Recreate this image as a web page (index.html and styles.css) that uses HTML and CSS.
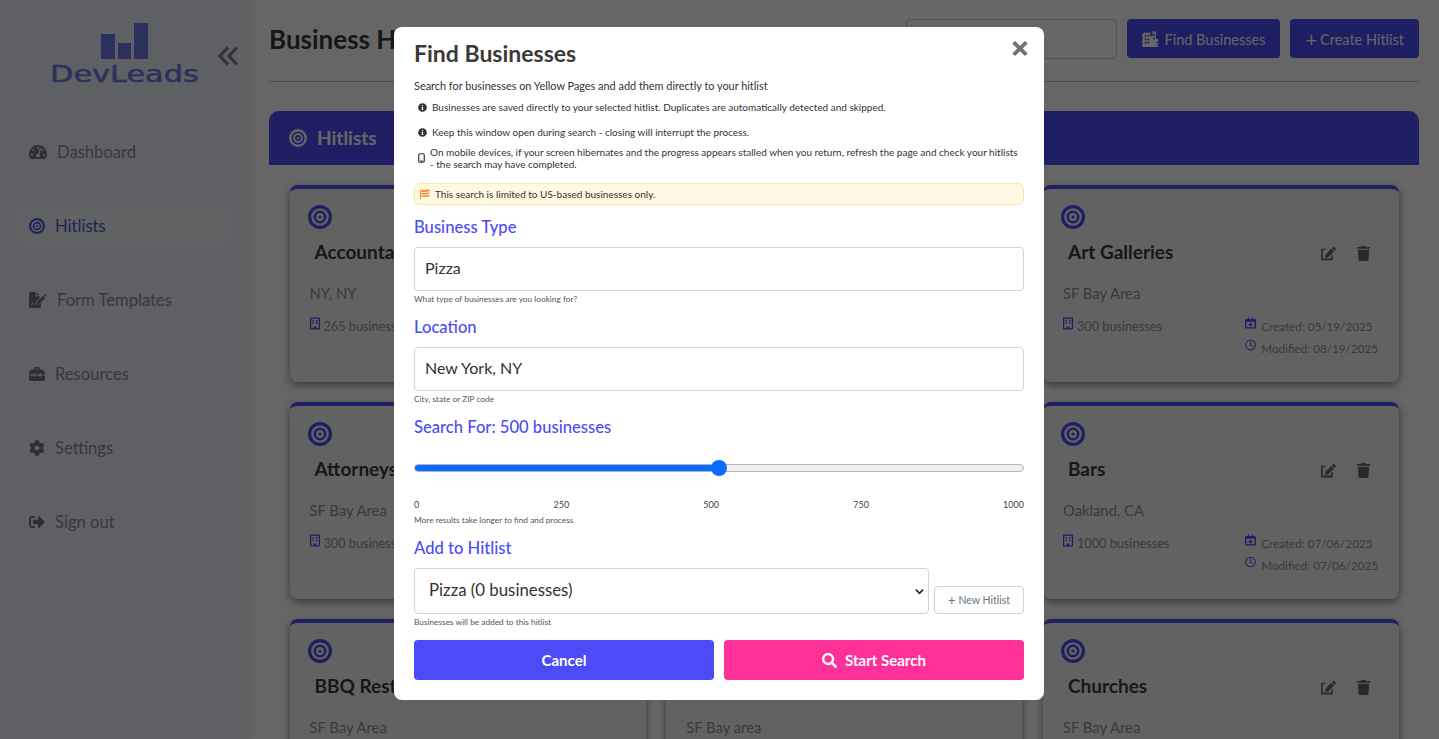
FILE: index.html
```html
<!DOCTYPE html>
<html lang="en">
<head>
    <meta charset="UTF-8">
    <title>DevLeads - Business Hitlists</title>
    <link rel="stylesheet" href="styles.css">
</head>
<body>
    <svg class="sprites" xmlns="http://www.w3.org/2000/svg">
        <symbol id="i-target" viewBox="0 0 24 24"><circle cx="12" cy="12" r="10.4" fill="none" stroke="currentColor" stroke-width="3.2"/><circle cx="12" cy="12" r="5.2" fill="none" stroke="currentColor" stroke-width="2.6"/><circle cx="12" cy="12" r="1.6" fill="currentColor"/></symbol>
        <symbol id="i-dash" viewBox="0 0 576 512"><path fill="currentColor" d="M288 32C128.94 32 0 160.94 0 320c0 52.8 14.25 102.26 39.06 144.8 5.61 9.62 16.3 15.2 27.44 15.2h443c11.14 0 21.83-5.58 27.44-15.2C561.75 422.26 576 372.8 576 320c0-159.06-128.94-288-288-288zm0 64c14.71 0 26.58 10.13 30.32 23.65-1.11 2.26-2.64 4.23-3.45 6.67l-9.22 27.67c-5.13 3.49-10.97 6.01-17.64 6.01-17.67 0-32-14.33-32-32S270.33 96 288 96zM96 384c-17.67 0-32-14.33-32-32s14.33-32 32-32 32 14.33 32 32-14.33 32-32 32zm48-160c-17.67 0-32-14.33-32-32s14.33-32 32-32 32 14.33 32 32-14.33 32-32 32zm246.77-72.41l-61.33 184C343.13 347.33 352 364.54 352 384c0 11.72-3.38 22.55-8.88 32H232.88c-5.5-9.45-8.88-20.28-8.88-32 0-33.94 26.5-61.43 59.9-63.59l61.34-184.01c4.17-12.56 17.73-19.45 30.36-15.17 12.57 4.19 19.35 17.79 15.17 30.36zm14.66 57.2l15.52-46.55c3.47-1.29 7.13-2.23 11.05-2.23 17.67 0 32 14.33 32 32s-14.33 32-32 32c-11.38-.01-20.89-6.28-26.57-15.22zM480 384c-17.67 0-32-14.33-32-32s14.33-32 32-32 32 14.33 32 32-14.33 32-32 32z"/></symbol>
        <symbol id="i-form" viewBox="0 0 36 32"><path fill="currentColor" d="M0 2.5A2.5 2.5 0 0 1 2.5 0H13v8.5h8.500V12L14 19.500 13 25h7l4-3.500V29.500A2.500 2.500 0 0 1 21.500 32h-19A2.500 2.500 0 0 1 0 29.500z"/><path fill="currentColor" d="M15 0.300 21.300 6.600H15zM16 19.500 28.500 7l4.500 4.500L20.500 24l-5.500 1zM30 5.500l2-2 4 4-2 2z"/><path fill="none" stroke="#edf0f7" stroke-width="1.400" d="M4 26l3-4 2 3 2-2"/></symbol>
        <symbol id="i-toolbox" viewBox="0 0 32 28"><path fill="currentColor" d="M10 5V3a3 3 0 0 1 3-3h6a3 3 0 0 1 3 3v2h3.500c1 0 1.800.4 2.500 1l3 3c.6.6 1 1.500 1 2.300V15h-8v-2h-4v2h-8v-2H8v2H0v-3.700c0-.8.300-1.700 1-2.300l3-3c.7-.6 1.500-1 2.500-1zm3-2v2h6V3zM0 17h8v2h4v-2h8v2h4v-2h8v8a3 3 0 0 1-3 3H3a3 3 0 0 1-3-3z"/></symbol>
        <symbol id="i-cog" viewBox="0 0 512 512"><path fill="currentColor" d="M487.4 315.7l-42.6-24.6c4.3-23.2 4.3-47 0-70.2l42.6-24.6c4.9-2.8 7.1-8.6 5.5-14-11.1-35.6-30-67.8-54.7-94.6-3.8-4.1-10-5.1-14.8-2.3L380.8 110c-17.9-15.4-38.5-27.3-60.8-35.1V25.8c0-5.6-3.9-10.5-9.4-11.7-36.7-8.2-74.3-7.8-109.2 0-5.5 1.2-9.4 6.1-9.4 11.7V75c-22.2 7.9-42.8 19.8-60.8 35.1L88.7 85.5c-4.9-2.8-11-1.9-14.8 2.3-24.7 26.7-43.6 58.9-54.7 94.6-1.7 5.4.6 11.2 5.5 14L67.3 221c-4.3 23.2-4.3 47 0 70.2l-42.6 24.6c-4.9 2.8-7.1 8.6-5.5 14 11.1 35.6 30 67.8 54.7 94.6 3.8 4.1 10 5.1 14.8 2.3l42.6-24.6c17.9 15.4 38.5 27.3 60.8 35.1v49.2c0 5.6 3.9 10.5 9.4 11.7 36.7 8.2 74.3 7.8 109.2 0 5.5-1.2 9.4-6.1 9.4-11.7v-49.2c22.2-7.9 42.8-19.8 60.8-35.1l42.6 24.6c4.9 2.8 11 1.9 14.8-2.3 24.7-26.7 43.6-58.9 54.7-94.6 1.5-5.5-.7-11.3-5.6-14.1zM256 336c-44.1 0-80-35.9-80-80s35.9-80 80-80 80 35.9 80 80-35.9 80-80 80z"/></symbol>
        <symbol id="i-signout" viewBox="0 0 512 512"><path fill="currentColor" d="M497 273L329 441c-15 15-41 4.500-41-17v-96H152c-13.300 0-24-10.700-24-24v-96c0-13.300 10.700-24 24-24h136V88c0-21.400 25.900-32 41-17l168 168c9.300 9.400 9.300 24.600 0 34zM192 436v-40c0-6.600-5.400-12-12-12H96c-17.700 0-32-14.300-32-32V160c0-17.700 14.300-32 32-32h84c6.600 0 12-5.400 12-12V76c0-6.600-5.400-12-12-12H96c-53 0-96 43-96 96v192c0 53 43 96 96 96h84c6.600 0 12-5.400 12-12z"/></symbol>
        <symbol id="i-city" viewBox="0 0 32 28"><path fill="currentColor" d="M3 2h2v2h2V2h2v2h2V2h2v2h1v5h4V0h2v2h2V0h2v2h0v12h2a2 2 0 0 1 2 2v12H0V4h3zM4 7v3h3V7zm5 0v3h3V7zM4 13v3h3v-3zm5 0v3h3v-3zM4 19v3h3v-3zm5 0v3h3v-3zm10-13v3h3V6zm0 6v3h3v-3zm6 6v3h3v-3zm0 5v2h3v-2z" fill-rule="evenodd"/></symbol>
        <symbol id="i-building" viewBox="0 0 20 24"><path fill="currentColor" fill-rule="evenodd" d="M2 0h16a2 2 0 0 1 2 2v20a2 2 0 0 1-2 2H2a2 2 0 0 1-2-2V2a2 2 0 0 1 2-2zm.500 2.500v19h5V18h5v3.500h5v-19zM5 5h3v3H5zm7 0h3v3h-3zM5 10h3v3H5zm7 0h3v3h-3z"/></symbol>
        <symbol id="i-cal" viewBox="0 0 24 24"><path fill="currentColor" fill-rule="evenodd" d="M6 0h3v3h6V0h3v3h3a3 3 0 0 1 3 3v15a3 3 0 0 1-3 3H3a3 3 0 0 1-3-3V6a3 3 0 0 1 3-3h3zM3 9v12h18V9zm7.500 2h3v3h3v3h-3v3h-3v-3h-3v-3h3z"/></symbol>
        <symbol id="i-clock" viewBox="0 0 24 24"><circle cx="12" cy="12" r="10.500" fill="none" stroke="currentColor" stroke-width="2.200"/><path fill="none" stroke="currentColor" stroke-width="2.200" d="M12 5.500V12.500l4.500 2.500"/></symbol>
        <symbol id="i-edit" viewBox="0 0 576 512"><path fill="currentColor" d="M402.600 83.200l90.200 90.200c3.800 3.800 3.800 10 0 13.800L274.400 405.600l-92.800 10.300c-12.400 1.400-22.900-9.100-21.500-21.500l10.300-92.800L388.800 83.200c3.800-3.800 10-3.800 13.800 0zm162-22.900l-48.800-48.800c-15.200-15.200-39.900-15.200-55.200 0l-35.400 35.400c-3.800 3.800-3.800 10 0 13.800l90.200 90.200c3.800 3.800 10 3.800 13.800 0l35.400-35.400c15.200-15.300 15.200-40 0-55.200zM384 346.200V448H64V128h73.900c3.200 0 6.200-1.300 8.500-3.500l32-32c7.600-7.600 2.200-20.500-8.500-20.500H48C21.500 72 0 93.500 0 120v352c0 26.500 21.500 48 48 48h352c26.500 0 48-21.500 48-48V314.200c0-10.700-12.900-16-20.500-8.500l-32 32c-2.200 2.300-3.500 5.300-3.500 8.500z"/></symbol>
        <symbol id="i-trash" viewBox="0 0 448 512"><path fill="currentColor" d="M432 32H312l-9.400-18.700A24 24 0 0 0 281.100 0H166.800a23.720 23.720 0 0 0-21.400 13.300L136 32H16A16 16 0 0 0 0 48v32a16 16 0 0 0 16 16h416a16 16 0 0 0 16-16V48a16 16 0 0 0-16-16zM53.200 467a48 48 0 0 0 47.900 45h245.800a48 48 0 0 0 47.900-45L416 128H32z"/></symbol>
        <symbol id="i-info" viewBox="0 0 512 512"><path fill="currentColor" d="M256 8C119.043 8 8 119.083 8 256c0 136.997 111.043 248 248 248s248-111.003 248-248C504 119.083 392.957 8 256 8zm0 110c23.196 0 42 18.804 42 42s-18.804 42-42 42-42-18.804-42-42 18.804-42 42-42zm56 254c0 6.627-5.373 12-12 12h-88c-6.627 0-12-5.373-12-12v-24c0-6.627 5.373-12 12-12h12v-64h-12c-6.627 0-12-5.373-12-12v-24c0-6.627 5.373-12 12-12h64c6.627 0 12 5.373 12 12v100h12c6.627 0 12 5.373 12 12v24z"/></symbol>
        <symbol id="i-search" viewBox="0 0 512 512"><path fill="currentColor" d="M505 442.700L405.300 343c-4.500-4.500-10.600-7-17-7H372c27.600-35.300 44-79.700 44-128C416 93.100 322.900 0 208 0S0 93.100 0 208s93.100 208 208 208c48.300 0 92.700-16.400 128-44v16.300c0 6.400 2.500 12.500 7 17l99.700 99.700c9.400 9.400 24.600 9.400 33.900 0l28.300-28.300c9.400-9.400 9.400-24.600.1-34zM208 336c-70.700 0-128-57.200-128-128 0-70.700 57.200-128 128-128 70.700 0 128 57.200 128 128 0 70.700-57.200 128-128 128z"/></symbol>
    </svg>

    <div class="page">
        <aside class="sidebar">
            <div class="brand-row">
                <div class="brand">
                    <div class="bars"><span class="bar bar-a"></span><span class="bar bar-b"></span><span class="bar bar-c"></span></div>
                    <div class="brand-name">DevLeads</div>
                </div>
                <svg class="collapse" viewBox="0 0 22 20"><path fill="none" stroke="currentColor" stroke-width="3" d="M11 1.500 3 10l8 8.500M20 1.500 12 10l8 8.500"/></svg>
            </div>
            <nav class="nav">
                <a class="nav-item"><svg class="nav-icon wide"><use href="#i-dash"/></svg><span>Dashboard</span></a>
                <a class="nav-item active"><svg class="nav-icon"><use href="#i-target"/></svg><span>Hitlists</span></a>
                <a class="nav-item"><svg class="nav-icon wide"><use href="#i-form"/></svg><span>Form Templates</span></a>
                <a class="nav-item"><svg class="nav-icon"><use href="#i-toolbox"/></svg><span>Resources</span></a>
                <a class="nav-item"><svg class="nav-icon"><use href="#i-cog"/></svg><span>Settings</span></a>
                <a class="nav-item"><svg class="nav-icon"><use href="#i-signout"/></svg><span>Sign out</span></a>
            </nav>
        </aside>

        <main class="main">
            <header class="topbar">
                <h1>Business Hitlists</h1>
                <input class="top-search" type="text">
                <button class="top-btn"><svg class="top-icon"><use href="#i-city"/></svg>Find Businesses</button>
                <button class="top-btn"><span class="plus">+</span>Create Hitlist</button>
            </header>

            <section class="panel">
                <div class="panel-head"><svg class="panel-icon"><use href="#i-target"/></svg>Hitlists</div>
                <div class="card-grid">
                    <article class="card">
                        <svg class="card-target"><use href="#i-target"/></svg>
                        <div class="card-title-row"><h3>Accountants</h3></div>
                        <p class="card-place">NY, NY</p>
                        <div class="card-meta"><span class="count"><svg class="mini"><use href="#i-building"/></svg>265 businesses</span></div>
                    </article>
                    <article class="card"></article>
                    <article class="card">
                        <svg class="card-target"><use href="#i-target"/></svg>
                        <div class="card-title-row"><h3>Art Galleries</h3><span class="round"><svg class="act"><use href="#i-edit"/></svg></span><span class="round"><svg class="act"><use href="#i-trash"/></svg></span></div>
                        <p class="card-place">SF Bay Area</p>
                        <div class="card-meta">
                            <span class="count"><svg class="mini"><use href="#i-building"/></svg>300 businesses</span>
                            <div class="dates">
                                <span><svg class="mini"><use href="#i-cal"/></svg>Created: 05/19/2025</span>
                                <span><svg class="mini"><use href="#i-clock"/></svg>Modified: 08/19/2025</span>
                            </div>
                        </div>
                    </article>

                    <article class="card">
                        <svg class="card-target"><use href="#i-target"/></svg>
                        <div class="card-title-row"><h3>Attorneys</h3></div>
                        <p class="card-place">SF Bay Area</p>
                        <div class="card-meta"><span class="count"><svg class="mini"><use href="#i-building"/></svg>300 businesses</span></div>
                    </article>
                    <article class="card"></article>
                    <article class="card">
                        <svg class="card-target"><use href="#i-target"/></svg>
                        <div class="card-title-row"><h3>Bars</h3><span class="round"><svg class="act"><use href="#i-edit"/></svg></span><span class="round"><svg class="act"><use href="#i-trash"/></svg></span></div>
                        <p class="card-place">Oakland, CA</p>
                        <div class="card-meta">
                            <span class="count"><svg class="mini"><use href="#i-building"/></svg>1000 businesses</span>
                            <div class="dates">
                                <span><svg class="mini"><use href="#i-cal"/></svg>Created: 07/06/2025</span>
                                <span><svg class="mini"><use href="#i-clock"/></svg>Modified: 07/06/2025</span>
                            </div>
                        </div>
                    </article>

                    <article class="card">
                        <svg class="card-target"><use href="#i-target"/></svg>
                        <div class="card-title-row"><h3>BBQ Restaurants</h3></div>
                        <p class="card-place">SF Bay Area</p>
                    </article>
                    <article class="card">
                        <svg class="card-target"><use href="#i-target"/></svg>
                        <div class="card-title-row"><h3>&nbsp;</h3></div>
                        <p class="card-place">SF Bay area</p>
                    </article>
                    <article class="card">
                        <svg class="card-target"><use href="#i-target"/></svg>
                        <div class="card-title-row"><h3>Churches</h3><span class="round"><svg class="act"><use href="#i-edit"/></svg></span><span class="round"><svg class="act"><use href="#i-trash"/></svg></span></div>
                        <p class="card-place">SF Bay Area</p>
                    </article>
                </div>
            </section>
        </main>
    </div>

    <div class="overlay">
        <div class="modal">
            <div class="modal-head">
                <h2>Find Businesses</h2>
                <svg class="close" viewBox="0 0 352 512"><path fill="currentColor" d="M242.720 256l100.070-100.070c12.280-12.280 12.280-32.190 0-44.480l-22.240-22.240c-12.280-12.280-32.190-12.280-44.480 0L176 189.280 75.930 89.210c-12.280-12.280-32.190-12.280-44.480 0L9.210 111.450c-12.280 12.280-12.280 32.190 0 44.480L109.280 256 9.210 356.070c-12.280 12.280-12.280 32.190 0 44.480l22.240 22.240c12.280 12.280 32.200 12.280 44.480 0L176 322.720l100.070 100.070c12.280 12.280 32.200 12.280 44.480 0l22.240-22.240c12.280-12.280 12.280-32.190 0-44.480L242.720 256z"/></svg>
            </div>
            <p class="lead">Search for businesses on Yellow Pages and add them directly to your hitlist</p>
            <div class="note note-a"><svg class="note-icon"><use href="#i-info"/></svg><span>Businesses are saved directly to your selected hitlist. Duplicates are automatically detected and skipped.</span></div>
            <div class="note note-b"><svg class="note-icon"><use href="#i-info"/></svg><span>Keep this window open during search - closing will interrupt the process.</span></div>
            <div class="note note-c">
                <svg class="note-phone" viewBox="0 0 14 20"><rect x="1.500" y="1.500" width="11" height="17" rx="2.500" fill="none" stroke="currentColor" stroke-width="2.400"/><rect x="4" y="15" width="6" height="2" fill="currentColor"/></svg>
                <span>On mobile devices, if your screen hibernates and the progress appears stalled when you return, refresh the page and check your hitlists<br>- the search may have completed.</span>
            </div>
            <div class="us-only">
                <svg class="flag" viewBox="0 0 20 20"><path fill="#f58a2e" d="M0 1h2v19H0zM3 2c3-1.500 5 1 8 0s5-1 8-.5v4c-3-.5-5-.5-8 .5S6 5 3 6.500zm0 6c3-1.500 5 1 8 0s5-1 8-.5v3c-3-.5-5-.5-8 .5s-5-1.500-8 0zm0 5c3-1.500 5 1 8 0s5-1 8-.5v3c-3-.5-5-.5-8 .5s-5-1.500-8 0z"/></svg>
                <span>This search is limited to US-based businesses only.</span>
            </div>

            <label class="field-label first-label">Business Type</label>
            <input class="field" type="text" value="Pizza">
            <p class="hint">What type of businesses are you looking for?</p>

            <label class="field-label">Location</label>
            <input class="field" type="text" value="New York, NY">
            <p class="hint">City, state or ZIP code</p>

            <label class="field-label">Search For: 500 businesses</label>
            <input class="range" type="range" min="0" max="1000" value="500">
            <div class="ticks"><span>0</span><span>250</span><span>500</span><span>750</span><span>1000</span></div>
            <p class="hint">More results take longer to find and process</p>

            <label class="field-label add-label">Add to Hitlist</label>
            <div class="hitlist-row">
                <div class="select-wrap">
                    <select class="hitlist-select"><option>Pizza (0 businesses)</option></select>
                    <svg class="select-caret" viewBox="0 0 12 8"><path fill="none" stroke="currentColor" stroke-width="2.200" d="M1.200 1.500 6 6.300l4.800-4.800"/></svg>
                </div>
                <button class="new-hitlist"><span class="plus">+</span>New Hitlist</button>
            </div>
            <p class="hint">Businesses will be added to this hitlist</p>

            <div class="modal-actions">
                <button class="action cancel">Cancel</button>
                <button class="action start"><svg class="action-icon"><use href="#i-search"/></svg>Start Search</button>
            </div>
        </div>
    </div>
</body>
</html>
```
FILE: styles.css
```css
* {
    box-sizing: border-box;
}
html, body {
    height: 100%;
}
body {
    margin: 0;
    overflow: hidden;
    font-family: Lato, "Open Sans", Arial, sans-serif;
    color: #333;
    background: #fff;
}
h1, h2, h3, p {
    margin: 0;
}
.sprites {
    display: none;
}
.page {
    display: flex;
    height: 739px;
    overflow: hidden;
}

/* sidebar */
.sidebar {
    width: 250px;
    flex-shrink: 0;
    background: #edf0f7;
    box-shadow: 1px 0 4px rgba(0, 0, 0, 0.1);
    padding: 23px 21px 0 19px;
}
.brand-row {
    display: flex;
    align-items: center;
    padding-left: 32px;
    height: 62px;
}
.brand {
    width: 147px;
    flex-shrink: 0;
}
.bars {
    display: flex;
    align-items: flex-end;
    justify-content: center;
    gap: 3px;
    height: 36px;
}
.bar {
    width: 13.5px;
    background: #6f79e8;
}
.bar-a { height: 25px; }
.bar-b { height: 16px; }
.bar-c { height: 36px; }
.brand-name {
    margin: 5px 0 0 -1px;
    font-family: "DejaVu Sans", sans-serif;
    font-size: 23px;
    line-height: 21px;
    color: #6f79e8;
    -webkit-text-stroke: 0.5px #6f79e8;
    transform: scaleX(1.32);
    transform-origin: left center;
    white-space: nowrap;
}
.collapse {
    width: 22px;
    height: 20px;
    flex-shrink: 0;
    margin-left: 19px;
    margin-top: 4px;
    color: #7a7d83;
}
.nav {
    display: flex;
    flex-direction: column;
    gap: 36px;
    margin-top: 48px;
}
.nav-item {
    display: flex;
    align-items: center;
    height: 38px;
    padding-left: 10px;
    gap: 10px;
    font-size: 16.6px;
    color: #8c8f95;
    border-radius: 6px;
}
.nav-icon {
    width: 16px;
    height: 16px;
    color: #74777d;
}
.nav-icon.wide {
    width: 18px;
}
.nav-item.active {
    background: #f2f5f7;
    color: #5558d8;
}
.nav-item.active .nav-icon {
    color: #5558d8;
}

/* main area */
.main {
    flex: 1;
    min-width: 0;
    padding: 0 20px 0 19px;
}
.topbar {
    display: flex;
    align-items: center;
    height: 82px;
    padding-bottom: 4px;
    border-bottom: 1px solid #b9babc;
    margin-bottom: 29px;
}
.topbar h1 {
    flex: 1;
    font-size: 26px;
    font-weight: 700;
    color: #3a3a3a;
}
.top-search {
    width: 211px;
    height: 40px;
    border: 1px solid #c8cacd;
    border-radius: 4px;
    background: #fff;
}
.top-btn {
    display: flex;
    align-items: center;
    height: 39px;
    margin-left: 10px;
    padding: 1px 15px 0;
    border: 0;
    border-radius: 4px;
    background: #4b4cf7;
    color: #fff;
    font-family: inherit;
    font-size: 14.5px;
}
.top-icon {
    width: 19px;
    height: 16px;
    margin-right: 4px;
}
.top-btn .plus {
    font-size: 20px;
    line-height: 1;
    margin-right: 3px;
}
.panel {
    border-radius: 10px 10px 0 0;
    background: #fff;
}
.panel-head {
    display: flex;
    align-items: center;
    gap: 10px;
    height: 54px;
    padding: 0 0 1px 20px;
    background: #4b4cf7;
    border-radius: 10px 10px 0 0;
    color: #fff;
    font-size: 19px;
    font-weight: 700;
}
.panel-icon {
    width: 18px;
    height: 18px;
}
.card-grid {
    display: grid;
    grid-template-columns: repeat(3, 356px);
    column-gap: 20.75px;
    row-gap: 20px;
    padding: 20px 20px 0 20.5px;
}
.card {
    height: 197px;
    padding: 16px 21px 0 20px;
    background: #f5f6f8;
    border-top: 4px solid #4b4cf7;
    border-radius: 8px;
    box-shadow: 0 3px 8px rgba(0, 0, 0, 0.45);
}
.card-target {
    display: block;
    width: 24px;
    height: 24px;
    margin-left: -2px;
    color: #4b4cf7;
}
.card-title-row {
    display: flex;
    align-items: center;
    height: 30px;
    margin-top: 7px;
    padding-left: 5px;
}
.card-title-row h3 {
    flex: 1;
    font-size: 19px;
    font-weight: 700;
    color: #3a3a3a;
    white-space: nowrap;
}
.round {
    display: flex;
    align-items: center;
    justify-content: center;
    width: 30px;
    height: 30px;
    margin: 4px 0 0 5px;
    border-radius: 50%;
    background: #f1f3f4;
    color: #66686c;
}
.act {
    width: 15px;
    height: 15px;
}
.card-place {
    margin-top: 18px;
    font-size: 14.8px;
    color: #8f9296;
}
.card-meta {
    display: flex;
    justify-content: space-between;
    margin-top: 15px;
    font-size: 12.7px;
    color: #8f9296;
}
.count {
    display: flex;
    gap: 4px;
    line-height: 18px;
}
.mini {
    width: 10px;
    height: 13px;
    color: #4b4cf7;
}
.dates {
    display: flex;
    flex-direction: column;
    gap: 4px;
    font-size: 11.7px;
    line-height: 18px;
}
.dates span {
    display: flex;
    gap: 5px;
}
.dates .mini {
    width: 11px;
    height: 12px;
}

/* modal */
.overlay {
    position: fixed;
    inset: 0;
    display: flex;
    justify-content: center;
    align-items: flex-start;
    background: rgba(0, 0, 0, 0.6);
}
.modal {
    width: 650px;
    height: 673px;
    margin: 27px 1px 0 0;
    padding: 0 20px;
    background: #fff;
    border-radius: 8px;
}
.modal-head {
    display: flex;
    justify-content: space-between;
    align-items: center;
    height: 54px;
    padding-bottom: 2px;
}
.modal-head h2 {
    font-size: 23px;
    font-weight: 700;
    color: #3a3a3a;
}
.close {
    width: 16px;
    height: 21px;
    margin-top: -10px;
    margin-right: -4px;
    color: #6c757d;
}
.lead {
    font-size: 10.9px;
    line-height: 14px;
    margin-top: -2px;
}
.note {
    display: flex;
    align-items: center;
    gap: 5px;
    padding-left: 4px;
    font-size: 10px;
    line-height: 12px;
    color: #333;
}
.note-a { margin-top: 8px; }
.note-b { margin-top: 13px; }
.note-c { margin-top: 8px; }
.note-icon {
    width: 9px;
    height: 9px;
    flex-shrink: 0;
}
.note-phone {
    width: 7px;
    height: 10px;
    flex-shrink: 0;
}
.us-only {
    display: flex;
    align-items: center;
    gap: 5px;
    height: 22px;
    margin-top: 13px;
    padding-left: 5px;
    border: 1px solid #ffe9a8;
    border-radius: 6px;
    background: #fff8e3;
    font-size: 10px;
}
.flag {
    width: 10px;
    height: 10px;
}
.field-label {
    display: block;
    margin-top: 13px;
    font-size: 16.6px;
    line-height: 20px;
    font-weight: 500;
    color: #4b4cf7;
}
.first-label {
    margin-top: 12px;
}
.field {
    display: block;
    width: 100%;
    height: 44px;
    margin-top: 10px;
    padding: 0 10px 4px;
    border: 1px solid #ced4da;
    border-radius: 4px;
    font-family: inherit;
    font-size: 16px;
    color: #333;
}
.hint {
    margin-top: 3px;
    font-size: 8.3px;
    line-height: 10px;
    color: #555;
}
.range {
    display: block;
    width: 100%;
    height: 16px;
    margin: 23px 0 0;
    appearance: none;
    -webkit-appearance: none;
    background: transparent;
}
.range::-webkit-slider-runnable-track {
    height: 8px;
    border: 1px solid #b5b5b5;
    border-radius: 4px;
    background: linear-gradient(to right, #0a6cff 50%, #efefef 50%);
}
.range::-webkit-slider-thumb {
    -webkit-appearance: none;
    width: 16px;
    height: 16px;
    margin-top: -5px;
    border-radius: 50%;
    background: #0a6cff;
}
.ticks {
    display: flex;
    justify-content: space-between;
    margin-top: 24px;
    font-size: 9px;
    line-height: 10px;
    color: #444;
}
.ticks + .hint {
    margin-top: 5px;
}
.add-label {
    margin-top: 13px;
}
.hitlist-row {
    display: flex;
    align-items: flex-end;
    gap: 5px;
    margin-top: 10px;
}
.select-wrap {
    position: relative;
    width: 515px;
}
.hitlist-select {
    display: block;
    width: 100%;
    height: 46px;
    padding: 0 14px 3px;
    appearance: none;
    -webkit-appearance: none;
    border: 1px solid #ced4da;
    border-radius: 4px;
    background: #fff;
    font-family: inherit;
    font-size: 16.8px;
    color: #333;
}
.select-caret {
    position: absolute;
    right: 5px;
    top: 20px;
    width: 9px;
    height: 7px;
    color: #222;
}
.new-hitlist {
    display: flex;
    align-items: center;
    justify-content: center;
    gap: 3px;
    width: 90px;
    height: 28px;
    padding: 0;
    border: 1px solid #ced4da;
    border-radius: 4px;
    background: #fff;
    font-family: inherit;
    font-size: 10.5px;
    color: #6c757d;
}
.new-hitlist .plus {
    font-size: 13px;
    line-height: 1;
}
.hitlist-row + .hint {
    margin-top: 3px;
}
.modal-actions {
    display: flex;
    gap: 10px;
    margin-top: 13px;
}
.action {
    display: flex;
    align-items: center;
    justify-content: center;
    gap: 8px;
    flex: 1;
    height: 40px;
    border: 0;
    border-radius: 4px;
    color: #fff;
    font-family: inherit;
    font-size: 15px;
    font-weight: 700;
}
.cancel {
    background: #4b4cf7;
}
.start {
    background: #ff3097;
}
.action-icon {
    width: 15px;
    height: 15px;
}
```
